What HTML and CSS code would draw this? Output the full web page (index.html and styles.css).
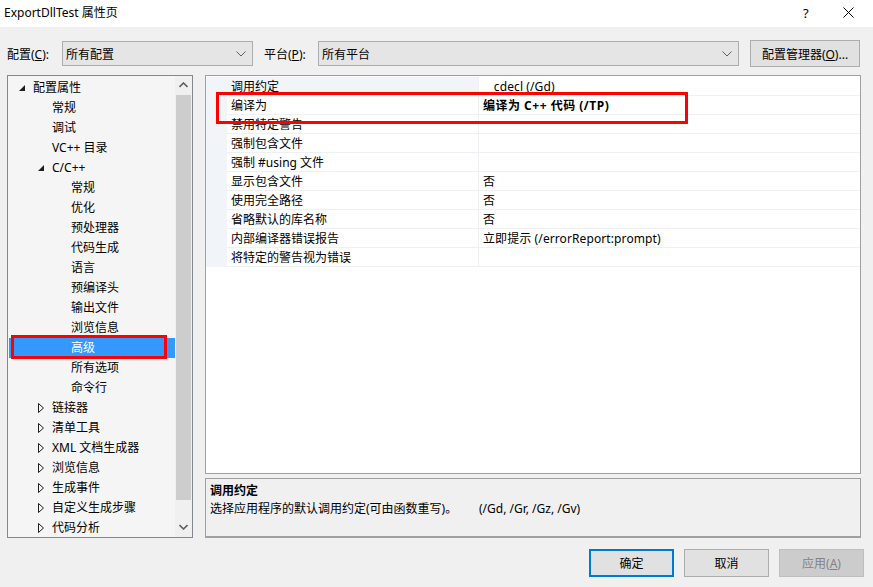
FILE: index.html
```html
<!DOCTYPE html>
<html lang="zh">
<head>
<meta charset="utf-8">
<title>ExportDllTest 属性页</title>
<link rel="stylesheet" href="styles.css">
</head>
<body>
<div class="window">
  <div class="titlebar">
    <span class="title">ExportDllTest 属性页</span>
    <span class="tb-help">?</span>
    <span class="tb-close"><svg width="11" height="11" viewBox="0 0 11 11"><path d="M0.5 0.5 L10.5 10.5 M10.5 0.5 L0.5 10.5" stroke="#000" stroke-width="1" fill="none"/></svg></span>
  </div>

  <div class="toolbar">
    <span class="lbl lbl-cfg">配置(<u>C</u>):</span>
    <div class="combo combo-cfg"><span>所有配置</span><svg class="chev" width="10" height="6" viewBox="0 0 10 6"><path d="M0.5 0.5 L5 5 L9.5 0.5" stroke="#606060" fill="none"/></svg></div>
    <span class="lbl lbl-plat">平台(<u>P</u>):</span>
    <div class="combo combo-plat"><span>所有平台</span><svg class="chev" width="10" height="6" viewBox="0 0 10 6"><path d="M0.5 0.5 L5 5 L9.5 0.5" stroke="#606060" fill="none"/></svg></div>
    <button class="btn btn-mgr">配置管理器(<u>O</u>)...</button>
  </div>

  <div class="content">
    <div class="tree">
      <div class="tree-list">
        <div class="ti l0"><span class="tw"><svg width="7" height="7" viewBox="0 0 7 7"><path d="M6 0 L6 6 L0 6 Z" fill="#1e1e1e"/></svg></span>配置属性</div>
        <div class="ti l1"><span class="tw"></span>常规</div>
        <div class="ti l1"><span class="tw"></span>调试</div>
        <div class="ti l1"><span class="tw"></span>VC++ 目录</div>
        <div class="ti l1"><span class="tw"><svg width="7" height="7" viewBox="0 0 7 7"><path d="M6 0 L6 6 L0 6 Z" fill="#1e1e1e"/></svg></span>C/C++</div>
        <div class="ti l2"><span class="tw"></span>常规</div>
        <div class="ti l2"><span class="tw"></span>优化</div>
        <div class="ti l2"><span class="tw"></span>预处理器</div>
        <div class="ti l2"><span class="tw"></span>代码生成</div>
        <div class="ti l2"><span class="tw"></span>语言</div>
        <div class="ti l2"><span class="tw"></span>预编译头</div>
        <div class="ti l2"><span class="tw"></span>输出文件</div>
        <div class="ti l2"><span class="tw"></span>浏览信息</div>
        <div class="ti l2 sel"><span class="tw"></span>高级</div>
        <div class="ti l2"><span class="tw"></span>所有选项</div>
        <div class="ti l2"><span class="tw"></span>命令行</div>
        <div class="ti l1"><span class="tw"><svg width="6" height="10" viewBox="0 0 6 10"><path d="M0.5 0.5 L5.5 5 L0.5 9.5 Z" fill="none" stroke="#1e1e1e"/></svg></span>链接器</div>
        <div class="ti l1"><span class="tw"><svg width="6" height="10" viewBox="0 0 6 10"><path d="M0.5 0.5 L5.5 5 L0.5 9.5 Z" fill="none" stroke="#1e1e1e"/></svg></span>清单工具</div>
        <div class="ti l1"><span class="tw"><svg width="6" height="10" viewBox="0 0 6 10"><path d="M0.5 0.5 L5.5 5 L0.5 9.5 Z" fill="none" stroke="#1e1e1e"/></svg></span>XML 文档生成器</div>
        <div class="ti l1"><span class="tw"><svg width="6" height="10" viewBox="0 0 6 10"><path d="M0.5 0.5 L5.5 5 L0.5 9.5 Z" fill="none" stroke="#1e1e1e"/></svg></span>浏览信息</div>
        <div class="ti l1"><span class="tw"><svg width="6" height="10" viewBox="0 0 6 10"><path d="M0.5 0.5 L5.5 5 L0.5 9.5 Z" fill="none" stroke="#1e1e1e"/></svg></span>生成事件</div>
        <div class="ti l1"><span class="tw"><svg width="6" height="10" viewBox="0 0 6 10"><path d="M0.5 0.5 L5.5 5 L0.5 9.5 Z" fill="none" stroke="#1e1e1e"/></svg></span>自定义生成步骤</div>
        <div class="ti l1"><span class="tw"><svg width="6" height="10" viewBox="0 0 6 10"><path d="M0.5 0.5 L5.5 5 L0.5 9.5 Z" fill="none" stroke="#1e1e1e"/></svg></span>代码分析</div>
        <div class="mark mark-tree"></div>
      </div>
      <div class="vscroll">
        <div class="sb-arrow"><svg width="9" height="6" viewBox="0 0 9 6"><path d="M0.5 5 L4.5 1 L8.5 5" stroke="#606060" stroke-width="1.6" fill="none"/></svg></div>
        <div class="sb-thumb"></div>
        <div class="sb-arrow"><svg width="9" height="6" viewBox="0 0 9 6"><path d="M0.5 1 L4.5 5 L8.5 1" stroke="#606060" stroke-width="1.6" fill="none"/></svg></div>
      </div>
    </div>

    <div class="right">
      <div class="grid">
        <div class="row"><div class="gm"></div><div class="gn cur">调用约定</div><div class="gv">__cdecl (/Gd)</div></div>
        <div class="row"><div class="gm"></div><div class="gn">编译为</div><div class="gv bold">编译为 C++ 代码 (/TP)</div></div>
        <div class="row"><div class="gm"></div><div class="gn">禁用特定警告</div><div class="gv"></div></div>
        <div class="row"><div class="gm"></div><div class="gn">强制包含文件</div><div class="gv"></div></div>
        <div class="row"><div class="gm"></div><div class="gn">强制 #using 文件</div><div class="gv"></div></div>
        <div class="row"><div class="gm"></div><div class="gn">显示包含文件</div><div class="gv">否</div></div>
        <div class="row"><div class="gm"></div><div class="gn">使用完全路径</div><div class="gv">否</div></div>
        <div class="row"><div class="gm"></div><div class="gn">省略默认的库名称</div><div class="gv">否</div></div>
        <div class="row"><div class="gm"></div><div class="gn">内部编译器错误报告</div><div class="gv">立即提示 (/errorReport:prompt)</div></div>
        <div class="row"><div class="gm"></div><div class="gn">将特定的警告视为错误</div><div class="gv"></div></div>
        <div class="mark mark-grid"></div>
      </div>
      <div class="desc">
        <div class="desc-title">调用约定</div>
        <div class="desc-text"><span class="desc-main">选择应用程序的默认调用约定(可由函数重写)。</span><span>(/Gd, /Gr, /Gz, /Gv)</span></div>
      </div>
    </div>
  </div>

  <div class="footer">
    <button class="btn btn-foot btn-ok">确定</button>
    <button class="btn btn-foot">取消</button>
    <button class="btn btn-foot btn-dis">应用(<u>A</u>)</button>
  </div>
</div>
</body>
</html>
```
FILE: styles.css
```css
* { box-sizing: border-box; }
html, body { margin: 0; padding: 0; }
body {
  width: 873px;
  height: 587px;
  overflow: hidden;
  background: #f0f0f0;
  font-family: "Noto Sans", "Noto Sans CJK SC", sans-serif;
  font-size: 12px;
  color: #000;
}
.window { width: 873px; height: 587px; display: flex; flex-direction: column; }

.titlebar {
  height: 27px;
  background: #fff;
  display: flex;
  align-items: center;
  padding-left: 4px;
  flex: none;
}
.title { flex: 1; font-size: 12px; line-height: 16px; margin-top: -1px; }
.tb-help { width: 12px; font-size: 13px; margin-right: 28px; margin-top: -1px; }
.tb-close { width: 11px; height: 11px; margin-right: 19px; margin-top: -2px; display: flex; }

.toolbar {
  height: 27px;
  margin-top: 13px;
  display: flex;
  align-items: center;
  padding-left: 7px;
  flex: none;
}
.lbl { white-space: nowrap; flex: none; }
.lbl u, .btn u { text-decoration: underline; }
.lbl-cfg { width: 55px; }
.combo {
  height: 25px;
  border: 1px solid #adadad;
  background: #e5e5e5;
  display: flex;
  align-items: center;
  padding-left: 3px;
  padding-right: 6px;
  flex: none;
}
.combo span { flex: 1; }
.combo-cfg { width: 191px; }
.lbl-plat { margin-left: 11px; width: 54px; }
.combo-plat { width: 421px; }
.chev { flex: none; }
.btn {
  font-family: inherit;
  font-size: 12px;
  color: #000;
  background: #e1e1e1;
  border: 1px solid #adadad;
  padding: 0;
  margin: 0;
}
.btn-mgr { width: 110px; height: 27px; margin-left: 11px; flex: none; }

.content {
  display: flex;
  margin-top: 8px;
  padding-left: 7px;
  gap: 12px;
  flex: none;
}
.tree {
  width: 186px;
  height: 463px;
  border: 1px solid #828790;
  background: #f5f5f5;
  display: flex;
}
.tree-list {
  flex: 1;
  position: relative;
  padding-top: 2px;
}
.ti {
  height: 20px;
  line-height: 20px;
  display: flex;
  align-items: center;
  white-space: nowrap;
}
.tw { width: 16px; height: 20px; display: flex; align-items: center; justify-content: flex-start; padding-left: 2px; flex: none; }
.l0 { padding-left: 9px; }
.l1 { padding-left: 28px; }
.l2 { padding-left: 47px; }
.ti.sel { background: #3399ff; color: #fff; margin-left: 1px; padding-left: 46px; }

.vscroll {
  width: 17px;
  background: #f0f0f0;
  display: flex;
  flex-direction: column;
  padding: 0 1px;
}
.sb-arrow { height: 18px; display: flex; align-items: center; justify-content: center; flex: none; }
.sb-thumb { height: 405px; background: #cdcdcd; margin-top: 1px; flex: none; }
.vscroll .sb-arrow:last-child { margin-top: auto; height: 20px; }

.right { width: 656px; display: flex; flex-direction: column; gap: 4px; }
.grid {
  height: 399px;
  border: 1px solid #a0a0a0;
  background: #fff;
  position: relative;
  padding-top: 1px;
}
.row { display: flex; height: 19px; }
.gm { width: 21px; background: #f1f5fa; flex: none; }
.gn {
  width: 252px;
  padding-left: 4px;
  padding-top: 2px;
  line-height: 16px;
  border-bottom: 1px solid #eef0f4;
  border-right: 1px solid #eef0f4;
  white-space: nowrap;
  flex: none;
}
.gn.cur { background: #f1f5fa; }
.gv {
  flex: 1;
  padding-left: 4px;
  padding-top: 2px;
  line-height: 16px;
  border-bottom: 1px solid #eef0f4;
  white-space: nowrap;
  letter-spacing: 0.1px;
}
.gv.bold { font-weight: bold; letter-spacing: 0.5px; }

.mark { position: absolute; border: 3px solid #ff0000; pointer-events: none; }
.mark-tree { left: 3px; top: 259px; width: 156px; height: 24px; }
.mark-grid { left: 10px; top: 16px; width: 472px; height: 32px; }

.desc {
  height: 60px;
  border: 1px solid #a0a0a0;
  border-bottom: 2px solid #a0a0a0;
  background: #f0f0f0;
  padding: 3px 0 0 4px;
}
.desc-title { font-weight: bold; line-height: 18px; }
.desc-text { line-height: 18px; display: flex; white-space: nowrap; }
.desc-main { width: 269px; }

.footer {
  display: flex;
  justify-content: flex-end;
  gap: 10px;
  padding-right: 9px;
  margin-top: 11px;
}
.btn-foot { width: 85px; height: 28px; }
.btn-ok { border: 2px solid #0078d7; }
.btn-dis { background: #cccccc; border-color: #bfbfbf; color: #838383; }
```
